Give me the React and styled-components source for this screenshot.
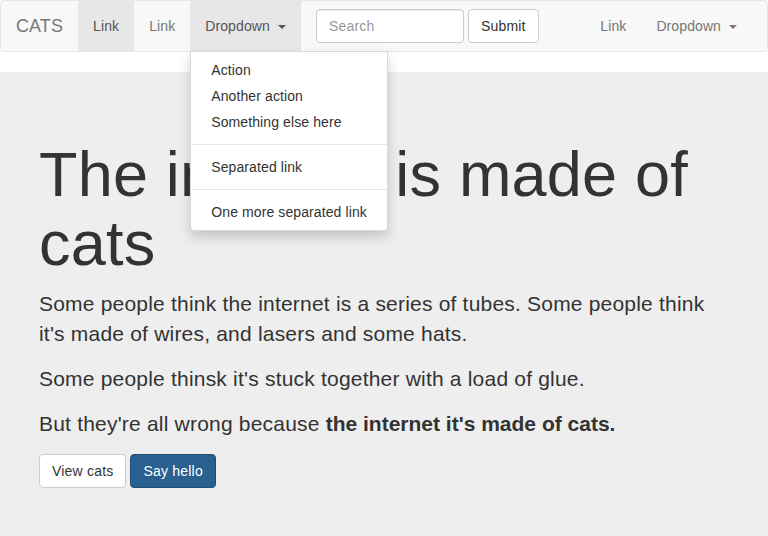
import React from "react";
import styled, { createGlobalStyle } from "styled-components";

const Global = createGlobalStyle`
  html, body { margin: 0; padding: 0; }
  body {
    font-family: "Liberation Sans", Arial, sans-serif;
    font-size: 14px;
    line-height: 1.42857;
    letter-spacing: 0.2px;
    color: #333;
    background: #fff;
  }
  * { box-sizing: border-box; }
`;

const Navbar = styled.nav`
  position: relative;
  display: flex;
  align-items: flex-start;
  min-height: 52px;
  margin-bottom: 20px;
  padding: 0 15px 0 0;
  background: #f8f8f8;
  border: 1px solid #e7e7e7;
  border-radius: 4px;
  letter-spacing: 0.1px;
`;

const Brand = styled.a`
  display: block;
  height: 50px;
  padding: 15px;
  font-size: 18px;
  line-height: 20px;
  color: #777;
  text-decoration: none;
`;

const Nav = styled.ul`
  display: flex;
  list-style: none;
  margin: 0;
  padding: 0;
  margin-left: ${(p) => (p.$right ? "auto" : "0")};
`;

const Item = styled.li`
  position: relative;
`;

const NavLink = styled.a`
  display: block;
  padding: 15px;
  line-height: 20px;
  color: ${(p) => (p.$active ? "#555" : "#777")};
  background: ${(p) => (p.$active ? "#e7e7e7" : "transparent")};
  text-decoration: none;
  white-space: nowrap;
`;

const Caret = styled.span`
  display: inline-block;
  width: 0;
  height: 0;
  margin-left: 4px;
  vertical-align: middle;
  border-top: 4px solid;
  border-right: 4px solid transparent;
  border-left: 4px solid transparent;
`;

const Menu = styled.ul`
  position: absolute;
  top: 100%;
  left: 0;
  z-index: 1000;
  min-width: 160px;
  margin: 0;
  padding: 5px 0;
  list-style: none;
  background: #fff;
  border: 1px solid rgba(0, 0, 0, 0.15);
  border-radius: 0 0 4px 4px;
  box-shadow: 0 6px 12px rgba(0, 0, 0, 0.175);
`;

const MenuLink = styled.a`
  display: block;
  padding: 3px 20px;
  line-height: 20px;
  color: #333;
  white-space: nowrap;
  text-decoration: none;
`;

const Divider = styled.li`
  height: 1px;
  margin: 9px 0;
  background: #e5e5e5;
`;

const Form = styled.form`
  display: flex;
  gap: 4px;
  padding: 8px 15px 0;
`;

const Input = styled.input`
  width: 148px;
  height: 34px;
  padding: 6px 12px;
  font-family: inherit;
  font-size: 14px;
  letter-spacing: 0.2px;
  color: #555;
  background: #fff;
  border: 1px solid #ccc;
  border-radius: 4px;
  box-shadow: inset 0 1px 1px rgba(0, 0, 0, 0.075);
  outline: none;
  &::placeholder { color: #999; }
`;

const Button = styled.button`
  height: 34px;
  padding: 6px 12px;
  font-family: inherit;
  font-size: 14px;
  letter-spacing: 0.2px;
  line-height: 20px;
  color: ${(p) => (p.$primary ? "#fff" : "#333")};
  background: ${(p) => (p.$primary ? "#28608f" : "#fff")};
  border: 1px solid ${(p) => (p.$primary ? "#204d74" : "#ccc")};
  border-radius: 4px;
  cursor: pointer;
`;

const Jumbotron = styled.section`
  background: #eee;
  padding: 48px 39px 48px;
  min-height: 464px;
`;

const Title = styled.h1`
  margin: 20px 0 10px;
  font-size: 63px;
  font-weight: 500;
  line-height: 1.1;
  color: #333;
  max-width: 680px;
`;

const Lead = styled.p`
  margin: 0 0 15px;
  font-size: 21px;
  font-weight: 200;
  line-height: 30px;
  max-width: 680px;
`;

const Strong = styled.strong`
  font-weight: 700;
  letter-spacing: 0;
`;

const Actions = styled.div`
  display: flex;
  gap: 4px;
`;

export default function App() {
  return (
    <>
      <Global />
      <Navbar>
        <Brand href="#">CATS</Brand>
        <Nav>
          <Item><NavLink $active href="#">Link</NavLink></Item>
          <Item><NavLink href="#">Link</NavLink></Item>
          <Item>
            <NavLink $active href="#">Dropdown <Caret /></NavLink>
            <Menu>
              <li><MenuLink href="#">Action</MenuLink></li>
              <li><MenuLink href="#">Another action</MenuLink></li>
              <li><MenuLink href="#">Something else here</MenuLink></li>
              <Divider />
              <li><MenuLink href="#">Separated link</MenuLink></li>
              <Divider />
              <li><MenuLink href="#">One more separated link</MenuLink></li>
            </Menu>
          </Item>
        </Nav>
        <Form onSubmit={(e) => e.preventDefault()}>
          <Input placeholder="Search" />
          <Button type="submit">Submit</Button>
        </Form>
        <Nav $right>
          <Item><NavLink href="#">Link</NavLink></Item>
          <Item><NavLink href="#">Dropdown <Caret /></NavLink></Item>
        </Nav>
      </Navbar>
      <Jumbotron>
        <Title>The internet is made of cats</Title>
        <Lead>
          Some people think the internet is a series of tubes. Some people think it's made of wires, and lasers and some hats.
        </Lead>
        <Lead>Some people thinsk it's stuck together with a load of glue.</Lead>
        <Lead>
          But they're all wrong because <Strong>the internet it's made of cats.</Strong>
        </Lead>
        <Actions>
          <Button>View cats</Button>
          <Button $primary>Say hello</Button>
        </Actions>
      </Jumbotron>
    </>
  );
}
